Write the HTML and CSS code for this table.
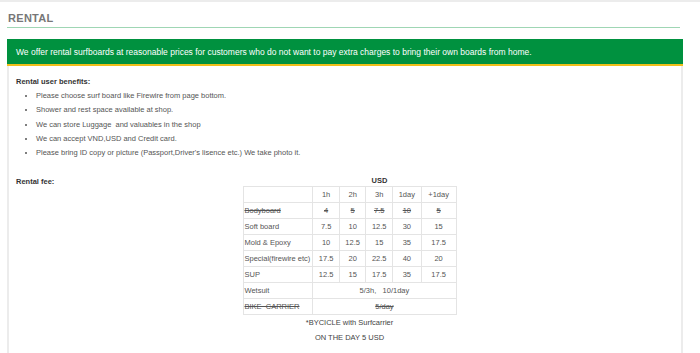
FILE: index.html
```html
<!DOCTYPE html>
<html>
<head>
<meta charset="utf-8">
<link rel="stylesheet" href="styles.css">
</head>
<body>
<div class="page">
  <h2 class="title">RENTAL</h2>
  <div class="banner">We offer rental surfboards at reasonable prices for customers who do not want to pay extra charges to bring their own boards from home.</div>
  <div class="content">
    <p class="label">Rental user benefits:</p>
    <ul class="benefits">
      <li>Please choose surf board like Firewire from page bottom.</li>
      <li>Shower and rest space available at shop.</li>
      <li>We can store Luggage&nbsp; and valuables in the shop</li>
      <li>We can accept VND,USD and Credit card.</li>
      <li>Please bring ID copy or picture (Passport,Driver's lisence etc.) We take photo it.</li>
    </ul>
    <div class="fee-row">
      <p class="label fee-label">Rental fee:</p>
      <div class="fee-table">
        <p class="usd">USD</p>
        <table class="prices">
          <tr><td class="name"></td><td>1h</td><td>2h</td><td>3h</td><td>1day</td><td>+1day</td></tr>
          <tr class="strike"><td class="name">Bodyboard</td><td>4</td><td>5</td><td>7.5</td><td>10</td><td>5</td></tr>
          <tr><td class="name">Soft board</td><td>7.5</td><td>10</td><td>12.5</td><td>30</td><td>15</td></tr>
          <tr><td class="name">Mold &amp; Epoxy</td><td>10</td><td>12.5</td><td>15</td><td>35</td><td>17.5</td></tr>
          <tr><td class="name">Special(firewire etc)</td><td>17.5</td><td>20</td><td>22.5</td><td>40</td><td>20</td></tr>
          <tr><td class="name">SUP</td><td>12.5</td><td>15</td><td>17.5</td><td>35</td><td>17.5</td></tr>
          <tr><td class="name">Wetsuit</td><td colspan="5">5/3h,&nbsp;&nbsp; 10/1day</td></tr>
          <tr class="strike"><td class="name">BIKE&nbsp; CARRIER</td><td colspan="5">5/day</td></tr>
        </table>
        <p class="note">*BYCICLE with Surfcarrier</p>
        <p class="note">ON THE DAY 5 USD</p>
      </div>
    </div>
  </div>
</div>
</body>
</html>
```

FILE: styles.css
```css
html, body {
  margin: 0;
  padding: 0;
  background: #fff;
}
body {
  font-family: "Liberation Sans", Arial, sans-serif;
  border-top: 2px solid #ececec;
  height: 351px;
  overflow: hidden;
}
.page {
  margin-left: 7px;
  width: 676px;
  height: 100%;
}
.title {
  margin: 10px 3px 0 0;
  padding: 0 0 3px 1px;
  font-size: 11px;
  line-height: 12px;
  font-weight: bold;
  color: #777;
  letter-spacing: 0.3px;
  border-bottom: 1px solid #9fd6b4;
}
.banner {
  margin-top: 11px;
  background: #00913f;
  color: #fff;
  font-size: 8.5px;
  line-height: 10px;
  padding: 8px 9px 7px;
  border-bottom: 2px solid #f0bf1a;
}
.content {
  border-left: 2px solid #ececec;
  border-right: 2px solid #ececec;
  height: 300px;
  padding: 0 0 0 7px;
  color: #555;
  font-size: 7.5px;
}
.label {
  margin: 0;
  font-weight: bold;
  color: #333;
  font-size: 7.5px;
}
.content > .label {
  padding-top: 11px;
  line-height: 10px;
}
.benefits {
  margin: 2px 0 0;
  padding-left: 20px;
  line-height: 14.3px;
}
.fee-row {
  display: flex;
  margin-top: 15px;
}
.fee-label {
  line-height: 10px;
  margin-top: 2px;
  width: 226px;
}
.fee-table {
  display: flex;
  flex-direction: column;
  align-items: center;
  width: 215px;
}
.usd {
  margin: 1px 0 0;
  font-weight: bold;
  color: #333;
  line-height: 10px;
  padding-left: 60px;
}
.prices {
  border-collapse: collapse;
  width: 214px;
  color: #555;
  font-size: 7.5px;
}
.prices td {
  border: 1px solid #e4e4e4;
  height: 15px;
  padding: 0 2px;
  text-align: center;
  line-height: 9px;
}
.prices td.name {
  text-align: left;
  width: 62px;
  padding-left: 1px;
  white-space: nowrap;
}
.strike td {
  text-decoration: line-through;
}
.note {
  margin: 0;
  line-height: 15px;
  color: #444;
  font-size: 7.5px;
}
.note:first-of-type {
  margin-top: 1px;
}
```
